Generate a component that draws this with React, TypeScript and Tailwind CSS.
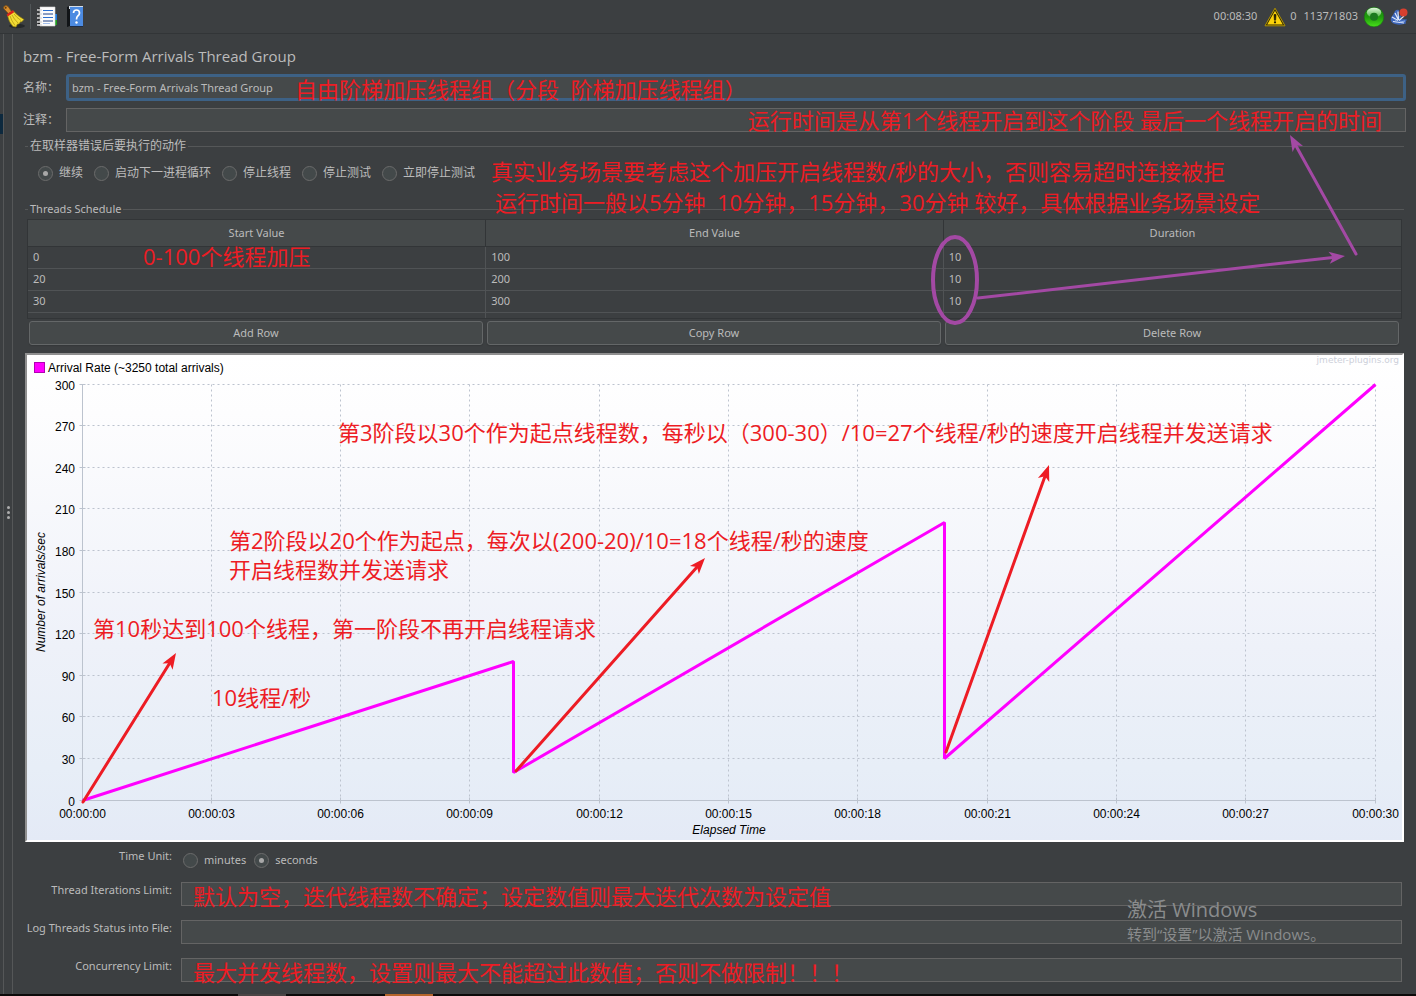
import type { ReactNode } from "react";

type NoteProps = {
  className: string;
  children: ReactNode;
};

type ArrowProps = {
  from: [number, number];
  to: [number, number];
  color: string;
};

type RadioProps = {
  name: string;
  label: string;
  checked?: boolean;
};

type TextRowProps = {
  id: string;
  label: string;
  note?: string;
};

const schedule = [
  { start: 0, end: 100, duration: 10 },
  { start: 20, end: 200, duration: 10 },
  { start: 30, end: 300, duration: 10 },
];

const errorActions = [
  "继续",
  "启动下一进程循环",
  "停止线程",
  "停止测试",
  "立即停止测试",
];

const PLOT = { left: 55, right: 1348, top: 29, bottom: 445 };
const xAt = (sec: number) =>
  Math.floor(PLOT.left + (sec / 30) * (PLOT.right - PLOT.left)) + 0.5;
const yAt = (rate: number) =>
  Math.floor(PLOT.bottom - (rate / 300) * (PLOT.bottom - PLOT.top)) + 0.5;

const chartNotes = [
  {
    x: 311,
    y: 86,
    text: "第3阶段以30个作为起点线程数，每秒以（300-30）/10=27个线程/秒的速度开启线程并发送请求",
  },
  {
    x: 202,
    y: 194,
    text: "第2阶段以20个作为起点，每次以(200-20)/10=18个线程/秒的速度",
  },
  { x: 202, y: 223, text: "开启线程数并发送请求" },
  { x: 66, y: 282, text: "第10秒达到100个线程，第一阶段不再开启线程请求" },
  { x: 185, y: 351, text: "10线程/秒" },
];

const Note: React.FC<NoteProps> = ({ className, children }) => (
  <p
    className={`pointer-events-none absolute z-10 font-['Open_Sans','Noto_Sans_CJK_SC',sans-serif] text-[22px] leading-6 whitespace-pre text-[#ed1c24] ${className}`}
  >
    {children}
  </p>
);

const Arrow: React.FC<ArrowProps> = ({ from, to, color }) => {
  const angle = Math.atan2(to[1] - from[1], to[0] - from[0]);
  const tailX = to[0] - 10 * Math.cos(angle);
  const tailY = to[1] - 10 * Math.sin(angle);
  return (
    <g>
      <line
        x1={from[0]}
        y1={from[1]}
        x2={tailX}
        y2={tailY}
        stroke={color}
        strokeWidth="3"
        strokeLinecap="round"
      />
      <path
        d="M0 0L-16 -6L-12 0L-16 6Z"
        fill={color}
        transform={`translate(${to[0]} ${to[1]}) rotate(${(angle * 180) / Math.PI})`}
      />
    </g>
  );
};

const Radio: React.FC<RadioProps> = ({ name, label, checked }) => (
  <label className="flex items-center gap-[6px] leading-4">
    <input
      type="radio"
      name={name}
      defaultChecked={checked}
      className="grid size-[15px] appearance-none place-content-center rounded-full border border-[#6b6b6b] bg-[#43494a] before:size-[5px] before:rounded-full checked:before:bg-[#a8a8a8]"
    />
    {label}
  </label>
);

const TextRow: React.FC<TextRowProps> = ({ id, label, note }) => (
  <>
    <label htmlFor={id} className="text-right leading-4">
      {label}
    </label>
    <div className="relative">
      <input
        id={id}
        type="text"
        className="block h-6 w-full border border-[#646464] bg-[#45494a] px-1 outline-none"
      />
      {note && <Note className="top-[2px] left-3">{note}</Note>}
    </div>
  </>
);

const BroomIcon = () => (
  <svg width="24" height="24" viewBox="0 0 24 24">
    <ellipse cx="15" cy="21" rx="8" ry="2.2" fill="#25282a" />
    <path d="M2 1.5Q4-.3 6.2 1.6L9.5 6.5L6.5 8.8L2.6 4.6Q.8 3 2 1.5Z" fill="#d9902f" stroke="#7d4a10" strokeWidth=".7" />
    <circle cx="3.7" cy="2.8" r="1" fill="#6b3d0c" />
    <path d="M5.5 10L11.5 6Q15 10.500 22 14.500L19.500 17L18.500 16.800L17 19L15.500 19L14 22L11 21.500Q6.500 17 5.500 10Z" fill="#f2dc35" stroke="#8c7a08" strokeWidth=".7" />
    <path d="M8 11Q9.500 16 13 20.500M10 10Q12 14 16 18M12 9Q14.500 12.500 19 15.500" fill="none" stroke="#b59b12" strokeWidth=".8" />
    <path d="M4.500 9.500L11 5L12.200 7.200L5.700 11.600Z" fill="#d8231c" />
  </svg>
);

const NotepadIcon = () => (
  <svg width="22" height="22" viewBox="0 0 22 22">
    <path d="M18 8h3v6h-3z" fill="#1f7be0" />
    <path d="M18 14h3v5h-3z" fill="#1f9b1f" />
    <path d="M4 1h15v19H4z" fill="#fbfbfb" stroke="#d6d6d6" strokeWidth=".6" />
    <path d="M7 4.500h10M7 11.500h10" stroke="#2c6fd0" strokeWidth="1.200" />
    <path d="M7 8h10M7 15h10" stroke="#1c3f86" strokeWidth="1" />
    <path d="M7 17.500h7" stroke="#8fb2e8" strokeWidth=".8" />
    <path d="M3 2.500v17" stroke="#1b1b1b" strokeWidth="2" strokeDasharray="2.500 1.800" />
    <path d="M1 4h5M1 8h5M1 12h5M1 16h5M1 19h5" stroke="#dcdcdc" strokeWidth="1.300" />
  </svg>
);

const HelpIcon = () => (
  <svg width="18" height="23" viewBox="0 0 18 23">
    <path d="M1 2L4 1V21L1 22Z" fill="#111417" />
    <path d="M3 1H17V4H3z" fill="#d5dde6" />
    <path d="M4 2H17V21H4z" fill="#4c8be2" />
    <path d="M4 21.500H17" stroke="#1d2c47" strokeWidth="1" />
    <path d="M7.500 8Q7.500 5 10.500 5T13.500 8Q13.500 9.700 11.800 11Q10.500 12 10.500 14.500" fill="none" stroke="#fff" strokeWidth="1.700" />
    <circle cx="10.500" cy="17.500" r="1.200" fill="#fff" />
  </svg>
);

const WarningIcon = () => (
  <svg width="22" height="20" viewBox="0 0 22 20">
    <path d="M11 1.200L21 18.800H1Z" fill="#2b2504" stroke="#b39500" strokeWidth="1" strokeLinejoin="round" />
    <path d="M11 3.800L18.800 17.400H3.200Z" fill="#fbd20a" />
    <path d="M10 7.500H12L11.600 13.200H10.400Z" fill="#1c1800" stroke="#1c1800" strokeWidth=".6" />
    <circle cx="11" cy="15.300" r="1.100" fill="#1c1800" />
  </svg>
);

const RunningIcon = () => (
  <svg width="20" height="22" viewBox="0 0 20 22">
    <defs>
      <linearGradient id="ball" x1="0" y1="0" x2="0" y2="1">
        <stop offset="0" stopColor="#1f8a14" />
        <stop offset=".5" stopColor="#1f9a0d" />
        <stop offset="1" stopColor="#48e01a" />
      </linearGradient>
      <linearGradient id="gloss" x1="0" y1="0" x2="0" y2="1">
        <stop offset="0" stopColor="#dff8dc" />
        <stop offset="1" stopColor="#4db343" />
      </linearGradient>
    </defs>
    <circle cx="10" cy="11" r="9.800" fill="url(#ball)" stroke="#127a0a" strokeWidth=".5" />
    <ellipse cx="10" cy="6.500" rx="7.200" ry="4.800" fill="url(#gloss)" />
    <circle cx="10" cy="10.800" r="4" fill="#1b7a1f" />
  </svg>
);

const QuillIcon = () => (
  <svg width="18" height="18" viewBox="0 0 18 18">
    <path d="M1 13Q0 9 3 7L5 3Q7 1 9 2L8 8L12 7L10 11L17 11.500Q15 14 16 15.500Q10 17.500 5 16Q2 15.500 1 13Z" fill="#3d66ba" />
    <path d="M2 9L8 12.500M5 5L8.500 12M8 3.500L8.500 12M3 13.500L14 15M9 12.500L14 8" stroke="#dfe8fa" strokeWidth="1.200" />
    <path d="M5 11L7 15M10 14L15 13" stroke="#8fafe8" strokeWidth="1" />
    <circle cx="13.500" cy="4.500" r="4" fill="#d8402f" />
  </svg>
);

const Toolbar = () => (
  <header className="flex h-[34px] items-center justify-between border-b border-[#323537] pr-2 pl-[2px]">
    <div className="flex items-center">
      <button type="button" aria-label="Clear all">
        <BroomIcon />
      </button>
      <span className="mr-[5px] ml-1 h-[25px] w-px bg-[#515658]" />
      <button type="button" aria-label="Function helper" className="mr-2">
        <NotepadIcon />
      </button>
      <button type="button" aria-label="Help">
        <HelpIcon />
      </button>
    </div>
    <div className="flex items-center">
      <span>00:08:30</span>
      <button type="button" aria-label="Log errors" className="mr-1 ml-[7px]">
        <WarningIcon />
      </button>
      <span>0</span>
      <span className="mr-[6px] ml-[7px]">1137/1803</span>
      <RunningIcon />
      <span className="ml-[6px]">
        <QuillIcon />
      </span>
    </div>
  </header>
);

const ScheduleTable = () => (
  <div className="relative mx-[2px] h-[100px] overflow-hidden border border-[#323537]">
    <table className="w-full table-fixed border-collapse">
      <thead>
        <tr className="h-[26px] border-b border-[#323537] bg-[#45494a]">
          <th className="border-r border-[#323537] font-normal">Start Value</th>
          <th className="border-r border-[#323537] font-normal">End Value</th>
          <th className="font-normal">Duration</th>
        </tr>
      </thead>
      <tbody>
        {schedule.map((row) => (
          <tr key={row.start} className="h-[22px] border-b border-[#505355]">
            <td className="border-r border-[#505355] px-[5px]">{row.start}</td>
            <td className="border-r border-[#505355] px-[5px]">{row.end}</td>
            <td className="px-[5px]">{row.duration}</td>
          </tr>
        ))}
        <tr className="h-2">
          <td className="border-r border-[#505355]" />
          <td className="border-r border-[#505355]" />
          <td />
        </tr>
      </tbody>
    </table>
    <Note className="top-6 left-[115px]">0-100个线程加压</Note>
  </div>
);

const ArrivalChart = () => {
  const seconds = [0, 3, 6, 9, 12, 15, 18, 21, 24, 27, 30];
  const rates = [0, 30, 60, 90, 120, 150, 180, 210, 240, 270, 300];
  const line = schedule
    .map((row, i) => {
      const t = i * row.duration;
      return `${xAt(t)},${yAt(row.start)} ${xAt(t + row.duration)},${yAt(row.end)}`;
    })
    .join(" ");

  return (
    <div className="mx-[2px] mt-2 border-2 border-t-[#8f8f8f] border-r-white border-b-white border-l-[#8f8f8f]">
      <svg
        viewBox="0 0 1375 485"
        className="block h-auto w-full font-['Liberation_Sans',Arial,sans-serif] text-[12px]"
        role="img"
        aria-label="Arrival Rate"
      >
        <defs>
          <linearGradient id="chartBg" x1="0" y1="0" x2="0" y2="1">
            <stop offset="0" stopColor="#ffffff" />
            <stop offset=".12" stopColor="#fdfdfe" />
            <stop offset=".6" stopColor="#eef1f9" />
            <stop offset=".85" stopColor="#e7eef7" />
            <stop offset="1" stopColor="#e4eaf6" />
          </linearGradient>
        </defs>
        <rect width="1375" height="485" fill="url(#chartBg)" />

        <rect x="7.500" y="7.500" width="10" height="10" fill="#ff00ff" stroke="#b300b3" />
        <text x="21" y="17">
          Arrival Rate (~3250 total arrivals)
        </text>
        <text
          x="1372"
          y="8"
          textAnchor="end"
          fill="#cdd0da"
          className="font-['DejaVu_Sans',sans-serif] text-[9px]"
        >
          jmeter-plugins.org
        </text>

        <g stroke="#bcc3ce">
          {seconds.map((s) => (
            <g key={s}>
              <line x1={xAt(s)} y1={yAt(300)} x2={xAt(s)} y2={yAt(0)} strokeDasharray={s === 0 ? undefined : "2 3"} />
              <line x1={xAt(s)} y1={yAt(0) - 3} x2={xAt(s)} y2={yAt(0) + 3} />
            </g>
          ))}
          {rates.map((r) => (
            <g key={r}>
              <line x1={xAt(0)} y1={yAt(r)} x2={xAt(30)} y2={yAt(r)} strokeDasharray={r === 0 ? undefined : "2 3"} />
              <line x1={xAt(0) - 3} y1={yAt(r)} x2={xAt(0) + 3} y2={yAt(r)} />
            </g>
          ))}
        </g>
        {seconds.map((s) => (
          <text key={s} x={xAt(s)} y="463" textAnchor="middle">
            {`00:00:${String(s).padStart(2, "0")}`}
          </text>
        ))}
        {rates.map((r) => (
          <text key={r} x="48" y={yAt(r) + 5} textAnchor="end">
            {r}
          </text>
        ))}
        <text x="702" y="479" textAnchor="middle" fontStyle="italic">
          Elapsed Time
        </text>
        <text transform="translate(18 237) rotate(-90)" textAnchor="middle" fontStyle="italic">
          Number of arrivals/sec
        </text>

        <polyline points={line} fill="none" stroke="#ff00ff" strokeWidth="3" strokeLinejoin="bevel" />

        <Arrow from={[56, 447]} to={[149, 298]} color="#ed1c24" />
        <Arrow from={[489, 416]} to={[678, 203]} color="#ed1c24" />
        <Arrow from={[919, 397]} to={[1022, 110]} color="#ed1c24" />
        <g
          fill="#ed1c24"
          className="font-['Open_Sans','Noto_Sans_CJK_SC',sans-serif] text-[22px]"
        >
          {chartNotes.map((note) => (
            <text key={note.text} x={note.x} y={note.y}>
              {note.text}
            </text>
          ))}
        </g>
      </svg>
    </div>
  );
};

const App = () => {
  return (
    <div className="flex min-h-screen flex-col bg-[#3c3f41] font-['Noto_Sans','Noto_Sans_CJK_SC',sans-serif] text-[11px] text-[#bbbbbb]">
      <Toolbar />
      <div className="flex flex-1">
        <div className="flex w-[13px] shrink-0 border-r border-[#555758]">
          <div className="w-1 border-r border-[#555758] pt-20">
            <div className="h-5 bg-[#0d293e]" />
          </div>
          <div className="flex flex-1 flex-col items-center justify-center gap-[2px] pb-1">
            <span className="size-[3px] rounded-full bg-[#adadad]" />
            <span className="size-[3px] rounded-full bg-[#adadad]" />
            <span className="size-[3px] rounded-full bg-[#adadad]" />
          </div>
        </div>

        <main className="relative min-w-0 flex-1 px-[10px] pt-[10px] pb-3">
          <h1 className="font-['Open_Sans',sans-serif] text-[15px] leading-6">
            bzm - Free-Form Arrivals Thread Group
          </h1>

          <div className="mt-[6px] flex items-center">
            <label htmlFor="name" className="w-[43px] shrink-0 text-xs">
              名称：
            </label>
            <div className="relative flex-1">
              <input
                id="name"
                type="text"
                defaultValue="bzm - Free-Form Arrivals Thread Group"
                className="block h-[27px] w-full rounded-[3px] border-[3px] border-[#3d6185] bg-[#45494a] px-[3px] outline-none"
              />
              <Note className="top-[3px] left-[229px]">
                自由阶梯加压线程组（分段  阶梯加压线程组）
              </Note>
            </div>
          </div>
          <div className="mt-[7px] flex items-center">
            <label htmlFor="comments" className="w-[43px] shrink-0 text-xs">
              注释：
            </label>
            <div className="relative flex-1">
              <input
                id="comments"
                type="text"
                className="block h-6 w-full border border-[#646464] bg-[#45494a] px-1 outline-none"
              />
              <Note className="top-0 right-6">
                运行时间是从第1个线程开启到这个阶段 最后一个线程开启的时间
              </Note>
            </div>
          </div>

          <fieldset className="relative mx-[2px] mt-[6px] border-t border-[#555758] text-xs">
            <legend className="ml-[3px] px-[2px] leading-4">在取样器错误后要执行的动作</legend>
            <div className="flex gap-[11px] pt-[11px] pl-[13px]">
              {errorActions.map((action, i) => (
                <Radio key={action} name="onError" label={action} checked={i === 0} />
              ))}
            </div>
            <Note className="top-[5px] left-[466px]">
              真实业务场景要考虑这个加压开启线程数/秒的大小，否则容易超时连接被拒
            </Note>
            <Note className="top-9 left-[470px]">
              运行时间一般以5分钟  10分钟，15分钟，30分钟 较好，具体根据业务场景设定
            </Note>
          </fieldset>

          <fieldset className="mx-[2px] mt-5 border-t border-[#555758]">
            <legend className="ml-[3px] px-[2px] leading-4">Threads Schedule</legend>
            <div className="pt-[2px]">
              <ScheduleTable />
              <div className="mt-[2px] mr-[5px] ml-1 grid grid-cols-3 gap-1">
                {["Add Row", "Copy Row", "Delete Row"].map((text) => (
                  <button
                    key={text}
                    type="button"
                    className="h-6 rounded-[3px] border border-[#646768] bg-[#45494a] shadow-[0_1px_1px_#35383a]"
                  >
                    {text}
                  </button>
                ))}
              </div>
            </div>
          </fieldset>

          <ArrivalChart />

          <form className="mt-[6px] grid grid-cols-[149px_1fr] gap-x-[9px] gap-y-[14px] pr-1">
            <span id="timeUnit" className="text-right leading-4">
              Time Unit:
            </span>
            <div
              role="radiogroup"
              aria-labelledby="timeUnit"
              className="flex gap-2 pt-1 pl-[2px]"
            >
              <Radio name="unit" label="minutes" />
              <Radio name="unit" label="seconds" checked />
            </div>
            <TextRow
              id="iterations"
              label="Thread Iterations Limit:"
              note="默认为空，迭代线程数不确定；设定数值则最大迭代次数为设定值"
            />
            <TextRow id="logFile" label="Log Threads Status into File:" />
            <TextRow
              id="concurrency"
              label="Concurrency Limit:"
              note="最大并发线程数，设置则最大不能超过此数值；否则不做限制！！！"
            />
          </form>

          <svg className="pointer-events-none absolute inset-0 size-full">
            <ellipse cx="942" cy="246" rx="22" ry="43" fill="none" stroke="#a349a4" strokeWidth="4" />
            <Arrow from={[965, 264]} to={[1332, 222]} color="#a349a4" />
            <Arrow from={[1343, 220]} to={[1277, 101]} color="#a349a4" />
          </svg>

          <div className="pointer-events-none absolute right-0 bottom-12 w-[289px] font-['Open_Sans','Noto_Sans_CJK_SC',sans-serif] text-[#8a8c8d]">
            <p className="text-[20px] leading-6">激活 Windows</p>
            <p className="text-[15px] leading-6">转到“设置”以激活 Windows。</p>
          </div>
        </main>
      </div>
      <footer className="flex h-[2px] bg-[#0c0a0a]">
        <span className="ml-[238px] w-12 bg-[#4a4545]" />
        <span className="ml-[99px] w-12 bg-[#b5652b]" />
      </footer>
    </div>
  );
};

export default App;
